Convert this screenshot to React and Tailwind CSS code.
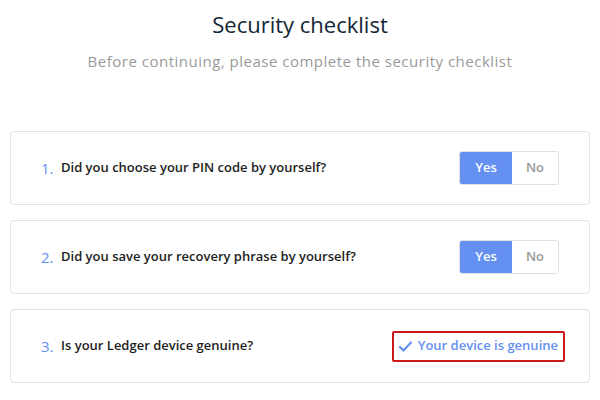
import React from "react";

function YesNo() {
  return (
    <div className="flex h-[34px] w-[100px] rounded-[3px] border border-[#e0e0e0] overflow-hidden text-[13px] font-semibold">
      <div className="flex w-[52px] items-center justify-center bg-[#6490f1] text-white">Yes</div>
      <div className="flex flex-1 items-center justify-center bg-white text-[#999999]">No</div>
    </div>
  );
}

function Card({ n, q, children }) {
  return (
    <div className="flex h-[74px] items-center justify-between rounded-[4px] border border-[#e2e2e2] bg-white pl-[30px] pr-[30px]">
      <div className="flex items-center text-[13px]">
        <span className="w-[20px] text-[15px] text-[#6490f1]">{n}.</span>
        <span className="font-semibold text-[#1d1d1d]">{q}</span>
      </div>
      {children}
    </div>
  );
}

export default function App() {
  return (
    <div
      className="flex h-[400px] w-[600px] flex-col bg-white px-[10px]"
      style={{ fontFamily: '"Open Sans", sans-serif' }}
    >
      <div className="mt-[9px] text-center text-[22px] leading-[30px] text-[#142533]">
        Security checklist
      </div>
      <div className="mt-[12px] text-center text-[15px] leading-[20px] tracking-[0.5px] text-[#999999]">
        Before continuing, please complete the security checklist
      </div>
      <div className="mt-[60px] flex flex-col gap-[15px]">
        <Card n={1} q="Did you choose your PIN code by yourself?">
          <YesNo />
        </Card>
        <Card n={2} q="Did you save your recovery phrase by yourself?">
          <YesNo />
        </Card>
        <Card n={3} q="Is your Ledger device genuine?">
          <div className="mr-[-6px] flex h-[31px] items-center gap-[6px] rounded-[2px] border-2 border-[#cc1a1a] px-[5px] text-[13px] font-semibold text-[#6490f1]">
            <svg width="13" height="11" viewBox="0 0 13 11" fill="none">
              <path d="M1 6l3.5 3.5L12 1.5" stroke="#6490f1" strokeWidth="2.2" strokeLinecap="round" strokeLinejoin="round" />
            </svg>
            <span>Your device is genuine</span>
          </div>
        </Card>
      </div>
    </div>
  );
}
